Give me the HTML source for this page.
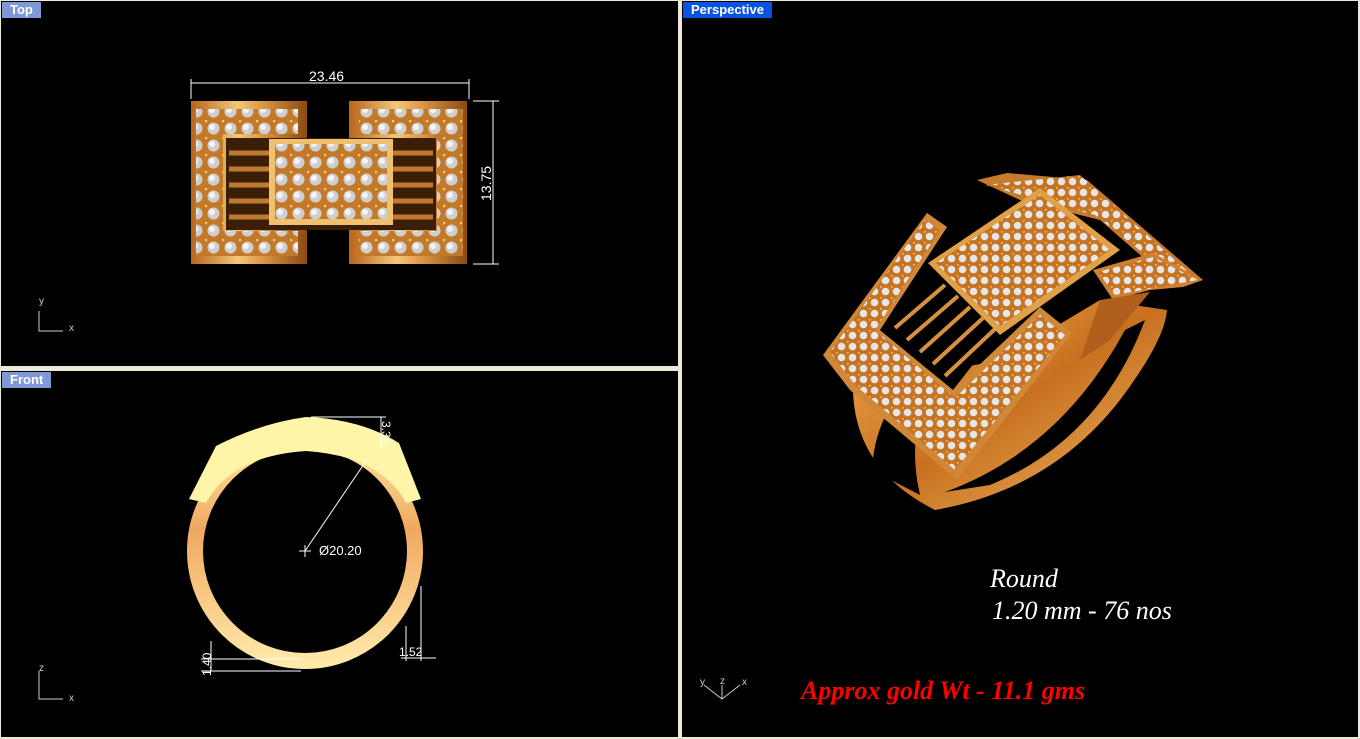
<!DOCTYPE html>
<html><head><meta charset="utf-8"><style>
html,body{margin:0;padding:0;background:#ece9d8;width:1360px;height:739px;overflow:hidden;font-family:"Liberation Sans",sans-serif}
.vp{position:absolute;background:#000;overflow:hidden}
.lbl{position:absolute;left:2px;top:2px;color:#fff;font-weight:bold;font-size:13px;padding:0 8px;line-height:16px}
svg{position:absolute;left:0;top:0}
</style></head><body>
<div class="vp" style="left:1px;top:1px;width:677px;height:365px">
<svg width="677" height="365">
<defs>
<linearGradient id="g1" x1="0" x2="1"><stop offset="0" stop-color="#b8651c"/><stop offset=".4" stop-color="#f2c878"/><stop offset=".6" stop-color="#e09a48"/><stop offset="1" stop-color="#8a4a10"/></linearGradient>
<pattern id="dia" width="17" height="17" patternUnits="userSpaceOnUse"><rect width="17" height="17" fill="#c27a2a"/><circle cx="8.5" cy="8.5" r="6" fill="#cfcfcf"/><circle cx="7" cy="7" r="3" fill="#f4f4f4"/><circle cx="1" cy="1" r="1.3" fill="#ffcc66"/></pattern>
</defs>
<rect x="190" y="100" width="116" height="163" fill="url(#g1)"/>
<rect x="348" y="100" width="118" height="163" fill="url(#g1)"/>
<rect x="225" y="137" width="210" height="92" fill="#3a1e05"/>
<g stroke="#c07a30" stroke-width="5"><line x1="228" y1="152" x2="270" y2="152"/><line x1="228" y1="168" x2="270" y2="168"/><line x1="228" y1="184" x2="270" y2="184"/><line x1="228" y1="200" x2="270" y2="200"/><line x1="228" y1="216" x2="270" y2="216"/><line x1="390" y1="152" x2="432" y2="152"/><line x1="390" y1="168" x2="432" y2="168"/><line x1="390" y1="184" x2="432" y2="184"/><line x1="390" y1="200" x2="432" y2="200"/><line x1="390" y1="216" x2="432" y2="216"/></g>
<rect x="195" y="108" width="102" height="25" fill="url(#dia)"/>
<rect x="195" y="230" width="102" height="25" fill="url(#dia)"/>
<rect x="195" y="133" width="27" height="97" fill="url(#dia)"/>
<rect x="358" y="108" width="104" height="25" fill="url(#dia)"/>
<rect x="358" y="230" width="104" height="25" fill="url(#dia)"/>
<rect x="436" y="133" width="26" height="97" fill="url(#dia)"/>
<rect x="268" y="138" width="124" height="86" fill="#f0c070"/>
<rect x="274" y="143" width="112" height="75" fill="url(#dia)"/>
<g stroke="#fff" fill="none" stroke-width="1"><line x1="190" y1="82" x2="468" y2="82"/><line x1="190" y1="78" x2="190" y2="98"/><line x1="468" y1="78" x2="468" y2="98"/><line x1="472" y1="100" x2="498" y2="100"/><line x1="472" y1="263" x2="498" y2="263"/><line x1="492" y1="100" x2="492" y2="263"/></g>
<text x="308" y="80" fill="#fff" font-size="14">23.46</text>
<text transform="translate(490,200) rotate(-90)" fill="#fff" font-size="14">13.75</text>
<g stroke="#ccc" fill="none"><polyline points="38,310 38,330 62,330"/></g>
<text x="38" y="303" fill="#ccc" font-size="10">y</text><text x="68" y="330" fill="#ccc" font-size="10">x</text>
</svg>
<div class="lbl" style="background:#7f98d8;left:1px;top:1px">Top</div>
</div>
<div class="vp" style="left:1px;top:371px;width:677px;height:366px">
<svg width="677" height="366">
<defs><linearGradient id="g2" x1="0" x2="0" y1="0" y2="1"><stop offset="0" stop-color="#ffe9a0"/><stop offset=".4" stop-color="#f0a860"/><stop offset="1" stop-color="#ffe8a8"/></linearGradient></defs>
<circle cx="304" cy="180" r="110" fill="none" stroke="url(#g2)" stroke-width="16"/>
<path d="M188,128 L215,75 Q260,52 305,46 Q360,48 398,72 L420,128 L405,132 Q380,85 305,80 Q230,85 205,132 Z" fill="#fff5a8"/>
<g stroke="#fff" fill="none" stroke-width="1"><line x1="304" y1="180" x2="365" y2="90"/><line x1="298" y1="180" x2="310" y2="180"/><line x1="304" y1="174" x2="304" y2="186"/><line x1="310" y1="46" x2="385" y2="46"/><line x1="380" y1="46" x2="380" y2="78"/><line x1="200" y1="288" x2="300" y2="288"/><line x1="200" y1="300" x2="300" y2="300"/><line x1="210" y1="270" x2="210" y2="300"/><line x1="400" y1="287" x2="435" y2="287"/><line x1="405" y1="255" x2="405" y2="290"/><line x1="420" y1="215" x2="420" y2="290"/></g>
<text x="318" y="184" fill="#fff" font-size="13">Ø20.20</text>
<text transform="translate(381,50) rotate(90)" fill="#fff" font-size="12">3.36</text>
<text transform="translate(210,305) rotate(-90)" fill="#fff" font-size="12">1.40</text>
<text x="398" y="285" fill="#fff" font-size="12">1.52</text>
<g stroke="#ccc" fill="none"><polyline points="38,300 38,328 62,328"/></g>
<text x="38" y="300" fill="#ccc" font-size="10">z</text><text x="68" y="330" fill="#ccc" font-size="10">x</text>
</svg>
<div class="lbl" style="background:#7f98d8;left:1px;top:1px">Front</div>
</div>
<div class="vp" style="left:682px;top:1px;width:676px;height:736px">
<svg width="676" height="736">
<defs>
<linearGradient id="g3" x1="0" x2="1" y1="0" y2="1"><stop offset="0" stop-color="#f5b050"/><stop offset=".5" stop-color="#c87020"/><stop offset="1" stop-color="#f0b860"/></linearGradient>
<pattern id="d2" width="11" height="11" patternUnits="userSpaceOnUse"><rect width="11" height="11" fill="#c47424"/><circle cx="5.5" cy="5.5" r="3.8" fill="#e6e6e6"/><circle cx="0.5" cy="0.5" r="1.4" fill="#ffb040"/></pattern>
</defs>
<g transform="translate(-682,-1)">
<path d="M853,390 Q855,470 935,510 Q1050,490 1120,400 Q1165,340 1167,310 L1100,300 L1000,360 L900,380 Z" fill="url(#g3)"/>
<path d="M872,470 Q875,410 920,372 L935,380 Q905,430 920,495 Z" fill="#000"/>
<path d="M945,492 Q1060,450 1125,330 L1145,320 Q1100,440 990,485 Z" fill="#000"/>
<polygon points="977,180 1007,173 1087,180 1203,280 1177,287 1100,220 1020,200" fill="#c87a2c"/>
<polygon points="985,185 1080,175 1195,278 1180,282 1095,215" fill="url(#d2)"/>
<polygon points="1093,270 1153,253 1203,280 1183,287 1150,290 1113,300" fill="#d08030"/>
<polygon points="1098,272 1153,257 1198,280 1115,295" fill="url(#d2)"/>
<polygon points="1100,300 1150,292 1110,340 1080,360" fill="#b0601c"/>
<polygon points="823,355 927,213 947,227 880,330 953,390 1040,307 1072,333 957,480 850,390" fill="#d08838"/>
<polygon points="830,352 925,220 940,230 875,330 955,398 1040,315 1065,335 955,470 855,385" fill="url(#d2)"/>
<polygon points="880,330 933,273 1000,330 953,390" fill="#000"/>
<g stroke="#d89040" stroke-width="4"><line x1="895" y1="328" x2="945" y2="285"/><line x1="907" y1="340" x2="958" y2="296"/><line x1="920" y1="352" x2="970" y2="307"/><line x1="933" y1="364" x2="983" y2="318"/><line x1="945" y1="376" x2="995" y2="329"/></g>
<polygon points="928,263 1040,188 1120,250 1000,335" fill="#e0a048"/>
<polygon points="936,263 1040,195 1110,250 1000,326" fill="url(#d2)"/>
</g>
<text x="308" y="586" fill="#fff" font-size="26" font-style="italic" font-family="Liberation Serif,serif">Round</text>
<text x="310" y="618" fill="#fff" font-size="26" font-style="italic" font-family="Liberation Serif,serif">1.20 mm - 76 nos</text>
<text x="119" y="698" fill="#ff0000" font-size="26" font-style="italic" font-weight="bold" font-family="Liberation Serif,serif">Approx gold Wt - 11.1 gms</text>
<g stroke="#ccc" fill="none"><line x1="22" y1="684" x2="40" y2="698"/><line x1="40" y1="684" x2="40" y2="698"/><line x1="40" y1="698" x2="58" y2="684"/></g>
<text x="18" y="684" fill="#ccc" font-size="10">y</text><text x="38" y="683" fill="#ccc" font-size="10">z</text><text x="60" y="684" fill="#ccc" font-size="10">x</text>
</svg>
<div class="lbl" style="background:#0a52e0;left:1px;top:1px">Perspective</div>
</div>
</body></html>
